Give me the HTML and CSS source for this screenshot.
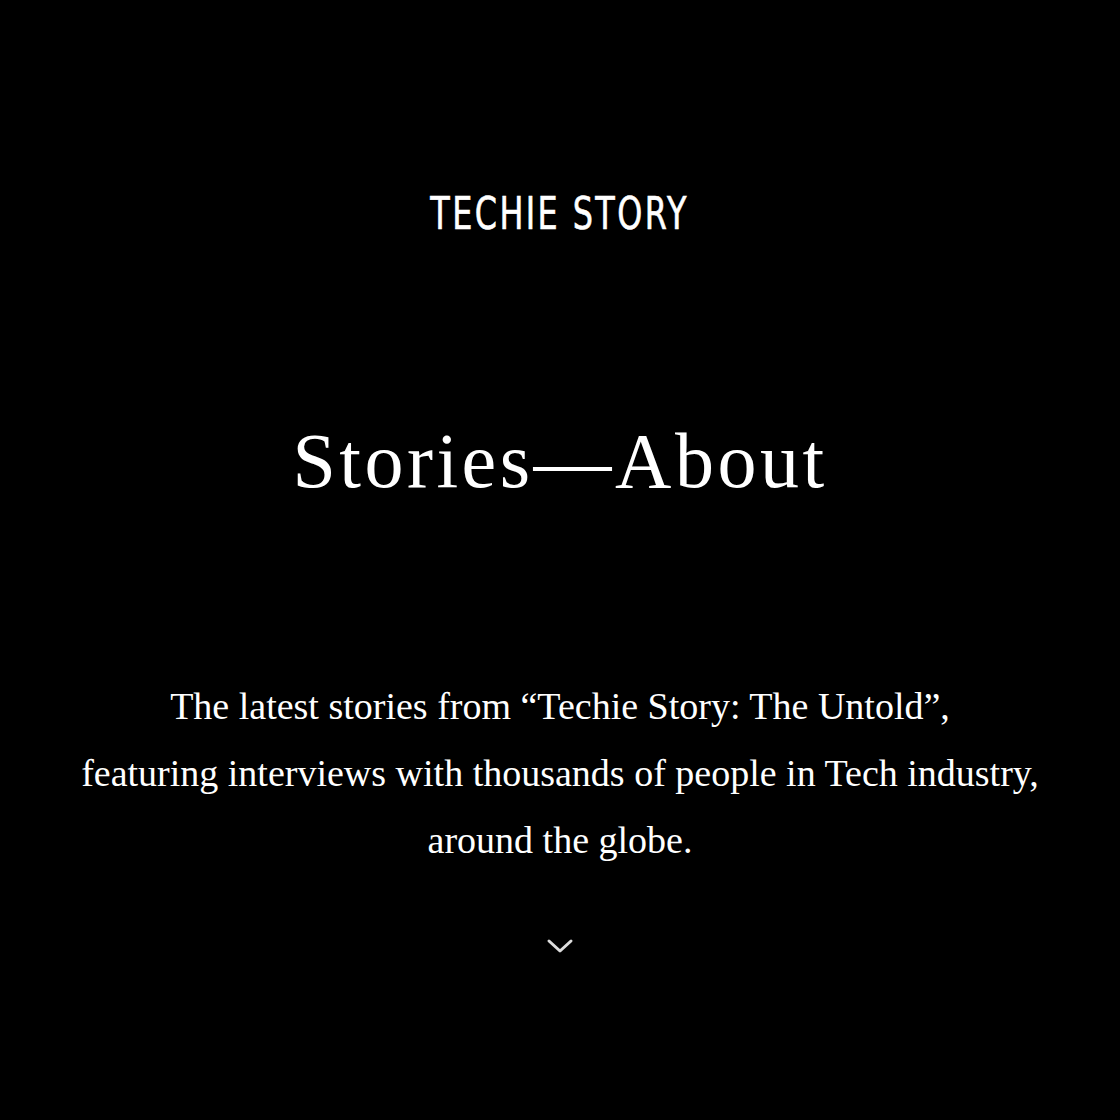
FILE: index.html
```html
<!DOCTYPE html>
<html lang="en">
<head>
<meta charset="utf-8">
<title>Techie Story — About</title>
<link rel="stylesheet" href="styles.css">
</head>
<body>
<main class="hero">
  <header class="brand"><span class="brand-text">TECHIE STORY</span></header>
  <h1 class="title">Stories—About</h1>
  <p class="intro">The latest stories from “Techie Story: The Untold”,<br>featuring interviews with thousands of people in Tech industry,<br>around the globe.</p>
  <div class="scroll">
    <svg width="28" height="16" viewBox="0 0 28 16" aria-hidden="true"><path d="M3 3 L14 13 L25 3" fill="none" stroke="#dcdcdc" stroke-width="3" stroke-linecap="round" stroke-linejoin="round"/></svg>
  </div>
</main>
</body>
</html>
```
FILE: styles.css
```css
html, body {
  margin: 0;
  padding: 0;
  background: #000;
  color: #fff;
}
.hero {
  width: 1120px;
  height: 1120px;
  display: flex;
  flex-direction: column;
  align-items: center;
  text-align: center;
}
.brand {
  margin-top: 188px;
  font-family: "DejaVu Sans Condensed", "DejaVu Sans", sans-serif;
  font-size: 44px;
  line-height: 52px;
  letter-spacing: 3px;
  font-weight: 400;
}
.brand-text {
  display: inline-block;
  transform: scaleX(0.805);
  -webkit-text-stroke: 0.6px #fff;
}
.title {
  margin: 171px 0 0;
  font-family: "Liberation Serif", serif;
  font-weight: 400;
  font-size: 78px;
  line-height: 100px;
  letter-spacing: 3.5px;
}
.intro {
  margin: 162px 0 0;
  font-family: "Liberation Serif", serif;
  font-size: 38px;
  line-height: 67px;
}
.scroll {
  margin-top: 64px;
  line-height: 0;
}
```
